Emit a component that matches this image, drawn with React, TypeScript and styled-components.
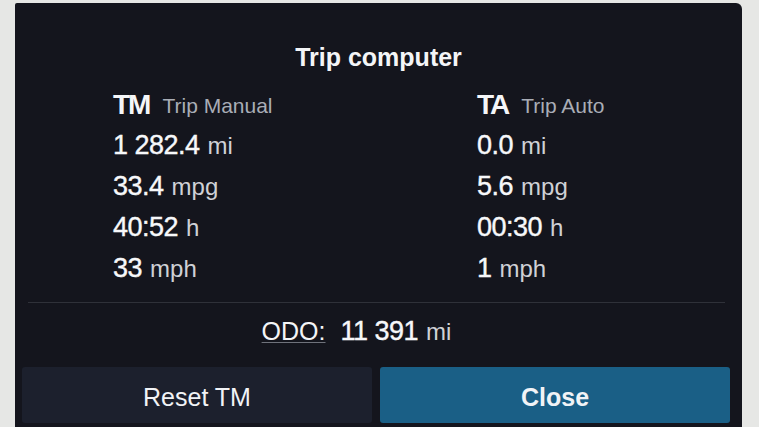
import React from 'react';
import styled, {createGlobalStyle} from 'styled-components';

const GlobalStyle = createGlobalStyle`
  html, body {
    margin: 0;
    padding: 0;
    background: #e6e7e5;
    overflow: hidden;
  }

  body {
    font-family: "Liberation Sans", Arial, sans-serif;
  }
`

type Stat = { value: string; unit: string };

const trips: { code: string; name: string; stats: Stat[] }[] = [
    {
        code: 'TM',
        name: 'Trip Manual',
        stats: [
            {value: '1 282.4', unit: 'mi'},
            {value: '33.4', unit: 'mpg'},
            {value: '40:52', unit: 'h'},
            {value: '33', unit: 'mph'},
        ],
    },
    {
        code: 'TA',
        name: 'Trip Auto',
        stats: [
            {value: '0.0', unit: 'mi'},
            {value: '5.6', unit: 'mpg'},
            {value: '00:30', unit: 'h'},
            {value: '1', unit: 'mph'},
        ],
    },
];

export default function App() {
    return (
        <>
            <GlobalStyle/>
            <Screen>
                <Panel>
                    <Title>Trip computer</Title>
                    <Columns>
                        {trips.map(trip => (
                            <Column key={trip.code}>
                                <Row>
                                    <Code>{trip.code}</Code>
                                    <Name>{trip.name}</Name>
                                </Row>
                                {trip.stats.map((stat, index) => (
                                    <Row key={index}>
                                        <Value>{stat.value}</Value>
                                        <Unit>{stat.unit}</Unit>
                                    </Row>
                                ))}
                            </Column>
                        ))}
                    </Columns>
                    <Divider/>
                    <Odo>
                        <OdoLabel>ODO:</OdoLabel>
                        <Value>11 391</Value>
                        <Unit>mi</Unit>
                    </Odo>
                    <Buttons>
                        <Button>Reset TM</Button>
                        <Button primary>Close</Button>
                    </Buttons>
                </Panel>
            </Screen>
        </>
    );
}

const Screen = styled.div`
  width: 759px;
  height: 427px;
  padding: 3px 17px 0 15px;
  box-sizing: border-box;
  overflow: hidden;
`

const Panel = styled.div`
  height: 440px;
  background: #14151d;
  border-radius: 2px 6px 0 0;
  padding-top: 39px;
  box-sizing: border-box;
  display: flex;
  flex-direction: column;
`

const Title = styled.h1`
  margin: 0;
  text-align: center;
  font-size: 25px;
  line-height: 30px;
  font-weight: 700;
  color: #f4f5f7;
`

const Columns = styled.div`
  display: grid;
  grid-template-columns: 364px 1fr;
  padding-left: 98px;
  margin-top: 12px;
`

const Column = styled.div`
  display: flex;
  flex-direction: column;
`

const Row = styled.div`
  height: 41px;
  display: flex;
  align-items: center;
  gap: 8px;
  white-space: nowrap;
`

const Code = styled.span`
  font-size: 28px;
  font-weight: 700;
  color: #f5f6f8;
  letter-spacing: -2px;
`

const Name = styled.span`
  font-size: 21px;
  color: #a9adb6;
  margin-left: 5px;
  margin-top: 3px;
`

const Value = styled.span`
  font-size: 27px;
  color: #f7f8fa;
  -webkit-text-stroke: 0.4px #f7f8fa;
  letter-spacing: -0.5px;
`

const Unit = styled.span`
  font-size: 24px;
  color: #cfd1d6;
  margin-top: 1px;
`

const Divider = styled.hr`
  margin: 13px 17px 0 13px;
  border: 0;
  height: 1px;
  background: #2f3139;
`

const Odo = styled.div`
  height: 40px;
  margin-top: 8px;
  margin-right: 44px;
  display: flex;
  align-items: center;
  justify-content: center;
  gap: 8px;
  white-space: nowrap;
`

const OdoLabel = styled.span`
  font-size: 25px;
  color: #f4f5f7;
  margin-right: 7px;
  text-decoration: underline;
  text-decoration-color: #6f727b;
  text-decoration-thickness: 1px;
  text-underline-offset: 2px;
`

const Buttons = styled.div`
  display: grid;
  grid-template-columns: 350px 350px;
  gap: 8px;
  padding-left: 7px;
  margin-top: 16px;
`

const Button = styled.button<{ primary?: boolean }>`
  height: 56px;
  border: 0;
  border-radius: 3px;
  padding: 4px 0 0;
  font-family: "Liberation Sans", Arial, sans-serif;
  font-size: 25px;
  font-weight: ${({primary}) => (primary ? 700 : 400)};
  color: #f1f3f6;
  background: ${({primary}) => (primary ? '#1a5f86' : '#1c202d')};
`
